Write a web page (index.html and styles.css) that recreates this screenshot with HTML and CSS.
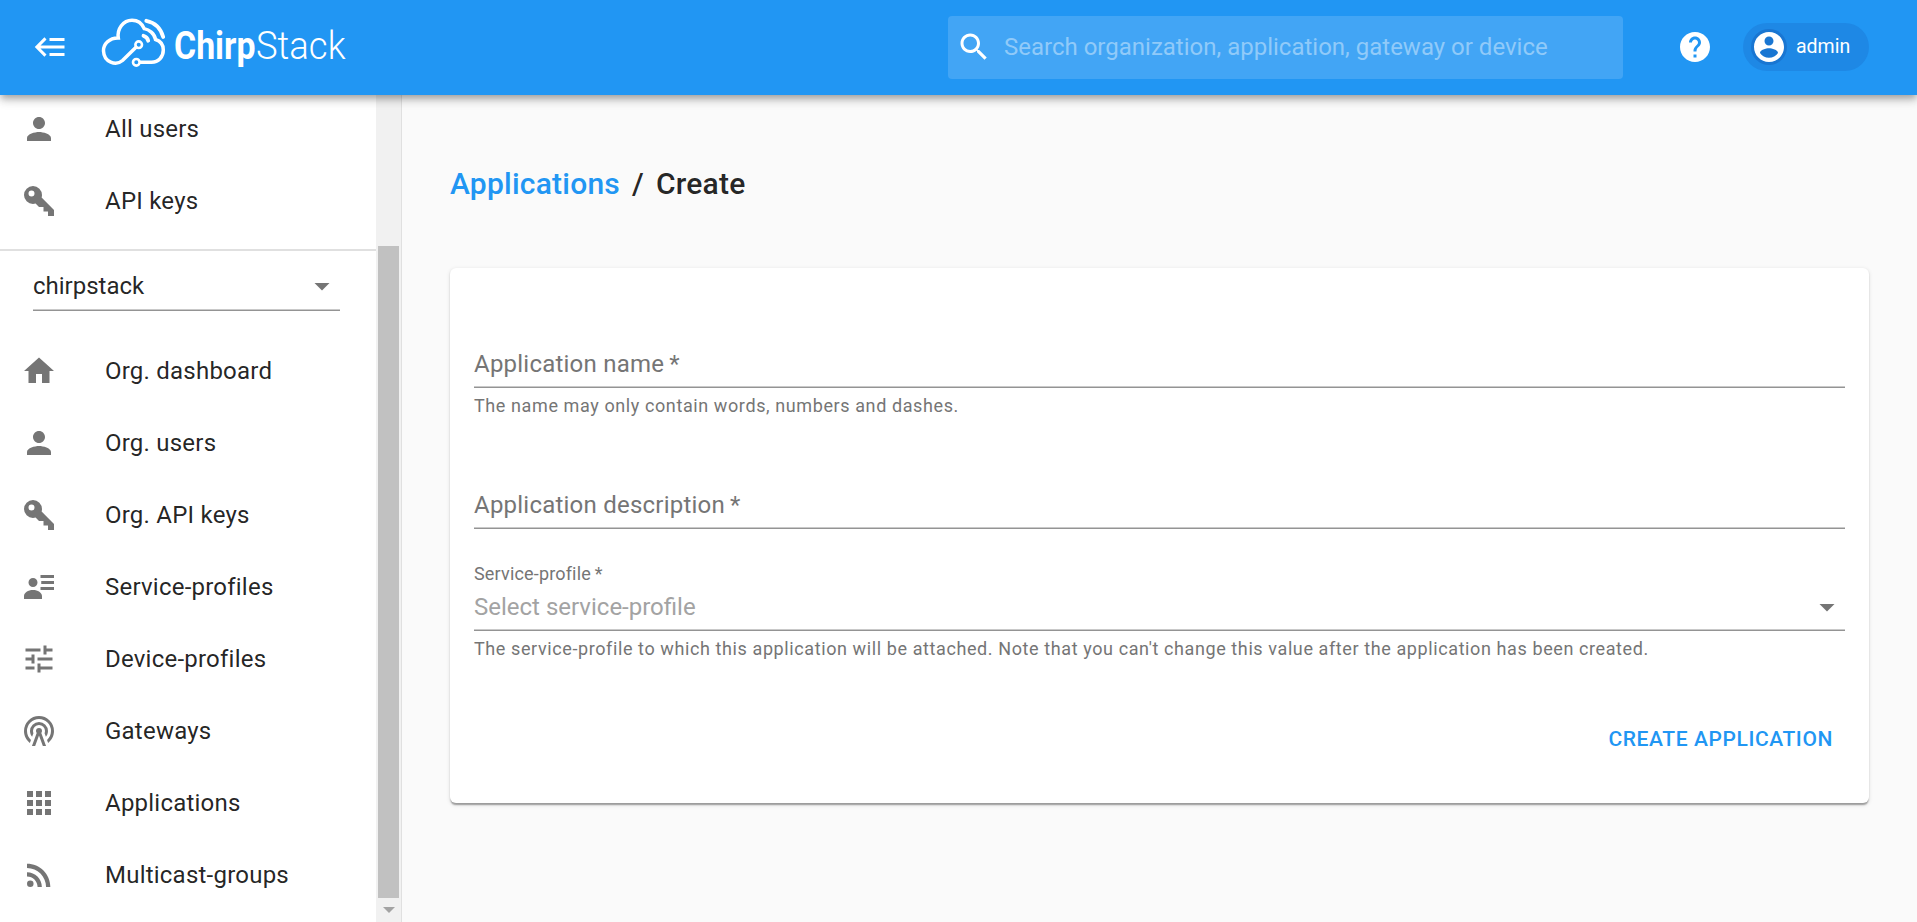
FILE: index.html
```html
<!DOCTYPE html>
<html lang="en">
<head>
<meta charset="utf-8">
<title>ChirpStack Application Server</title>
<link rel="stylesheet" href="styles.css">
</head>
<body>
<header class="appbar">
  <svg class="icon menu" viewBox="0 0 24 24"><path d="M5,13L9,17L7.6,18.42L1.18,12L7.6,5.58L9,7L5,11H21V13H5M21,6V8H11V6H21M21,16V18H11V16H21Z"/></svg>
  <svg class="logo" viewBox="0 0 250 60">
    <g fill="none" stroke="#fff" stroke-width="3.5" stroke-linecap="round">
      <path d="M35 35.300L21.500 48.500C15 54 3 50.500 2.500 39C2.200 32 8.500 25.700 17.300 25.900C16 17 22 8.200 31 8.200C36.500 8.200 41 11.500 43.200 16.600C48 17.500 53.500 21.500 54.500 27.500C59.500 29 62.300 33 62.300 38C62.300 45 57.500 50.300 50.500 50.300H39.500"/>
      <circle cx="37.700" cy="32.700" r="3.300" stroke-width="2.600"/>
      <circle cx="35.300" cy="50.300" r="3.300" stroke-width="2.600"/>
      <path stroke-width="3.800" d="M42.500 23.800Q46.300 24.800 47.200 28.700"/>
      <path stroke-width="3.800" d="M45.300 8.800Q58.500 11.500 62.200 25"/>
    </g>
    <text class="logo-bold" x="73" y="46.500" textLength="81.500" lengthAdjust="spacingAndGlyphs">Chirp</text>
    <text class="logo-light" x="155" y="46.500" textLength="89.500" lengthAdjust="spacingAndGlyphs">Stack</text>
  </svg>
  <div class="search">
    <svg class="icon" viewBox="0 0 24 24"><path d="M15.500 14h-.79l-.28-.27C15.410 12.590 16 11.110 16 9.500 16 5.910 13.090 3 9.500 3S3 5.910 3 9.500 5.910 16 9.500 16c1.610 0 3.090-.59 4.230-1.570l.27.280v.790l5 4.990L20.490 19l-4.990-5zm-6 0C7.010 14 5 11.990 5 9.500S7.010 5 9.500 5 14 7.010 14 9.500 11.990 14 9.500 14z"/></svg>
    <span class="search-text">Search organization, application, gateway or device</span>
  </div>
  <svg class="icon help" viewBox="0 0 24 24"><path d="M12 2C6.480 2 2 6.480 2 12s4.480 10 10 10 10-4.480 10-10S17.520 2 12 2zm1 17h-2v-2h2v2zm2.070-7.750l-.9.920C13.450 12.900 13 13.500 13 15h-2v-.5c0-1.100.450-2.100 1.170-2.830l1.240-1.260c.370-.360.590-.860.590-1.410 0-1.100-.9-2-2-2s-2 .9-2 2H8c0-2.210 1.790-4 4-4s4 1.790 4 4c0 .880-.360 1.680-.930 2.250z"/></svg>
  <div class="chip">
    <svg class="icon avatar" viewBox="0 0 24 24"><path d="M12 2C6.480 2 2 6.480 2 12s4.480 10 10 10 10-4.480 10-10S17.520 2 12 2zm0 3c1.660 0 3 1.340 3 3s-1.340 3-3 3-3-1.340-3-3 1.340-3 3-3zm0 14.200c-2.500 0-4.710-1.280-6-3.220.030-1.990 4-3.080 6-3.080 1.990 0 5.970 1.090 6 3.080-1.290 1.940-3.500 3.220-6 3.220z"/></svg>
    <span>admin</span>
  </div>
</header>

<div class="body">
  <aside class="drawer">
    <nav class="nav">
      <ul class="list list-top">
        <li class="item"><svg class="icon" viewBox="0 0 24 24"><path d="M12 12c2.210 0 4-1.790 4-4s-1.790-4-4-4-4 1.790-4 4 1.790 4 4 4zm0 2c-2.670 0-8 1.340-8 4v2h16v-2c0-2.660-5.330-4-8-4z"/></svg><span>All users</span></li>
        <li class="item"><svg class="icon" viewBox="0 0 24 24"><path d="M22,18V22H18V19H15V16H12L9.740,13.740C9.190,13.910 8.610,14 8,14A6,6 0 0,1 2,8A6,6 0 0,1 8,2A6,6 0 0,1 14,8C14,8.610 13.910,9.190 13.740,9.740L22,18M7,5A2,2 0 0,0 5,7A2,2 0 0,0 7,9A2,2 0 0,0 9,7A2,2 0 0,0 7,5Z"/></svg><span>API keys</span></li>
      </ul>
      <div class="org">
        <span>chirpstack</span>
        <svg class="icon" viewBox="0 0 24 24"><path d="M7 10l5 5 5-5z"/></svg>
      </div>
      <ul class="list">
        <li class="item"><svg class="icon" viewBox="0 0 24 24"><path d="M10 20v-6h4v6h5v-8h3L12 3 2 12h3v8z"/></svg><span>Org. dashboard</span></li>
        <li class="item"><svg class="icon" viewBox="0 0 24 24"><path d="M12 12c2.210 0 4-1.790 4-4s-1.790-4-4-4-4 1.790-4 4 1.790 4 4 4zm0 2c-2.670 0-8 1.340-8 4v2h16v-2c0-2.660-5.330-4-8-4z"/></svg><span>Org. users</span></li>
        <li class="item"><svg class="icon" viewBox="0 0 24 24"><path d="M22,18V22H18V19H15V16H12L9.740,13.740C9.190,13.910 8.610,14 8,14A6,6 0 0,1 2,8A6,6 0 0,1 8,2A6,6 0 0,1 14,8C14,8.610 13.910,9.190 13.740,9.740L22,18M7,5A2,2 0 0,0 5,7A2,2 0 0,0 7,9A2,2 0 0,0 9,7A2,2 0 0,0 7,5Z"/></svg><span>Org. API keys</span></li>
        <li class="item"><svg class="icon" viewBox="0 0 24 24"><path d="M13 4h9v2h-9zM13.500 8H22v2h-8.500zM13 12h9v2h-9zM8 6a3 3 0 1 1 0 6 3 3 0 0 1 0-6zM2 20v-2c0-2.200 2.700-4 6-4s6 1.800 6 4v2z"/></svg><span>Service-profiles</span></li>
        <li class="item"><svg class="icon" viewBox="0 0 24 24"><path d="M3 17v2h6v-2H3zM3 5v2h10V5H3zm10 16v-2h8v-2h-8v-2h-2v6h2zM7 9v2H3v2h4v2h2V9H7zm14 4v-2H11v2h10zm-6-4h2V7h4V5h-4V3h-2v6z"/></svg><span>Device-profiles</span></li>
        <li class="item"><svg class="icon" viewBox="0 0 24 24"><path d="M12,10A2,2 0 0,1 14,12C14,12.500 13.820,12.940 13.530,13.290L16.700,22H14.570L12,14.930L9.430,22H7.300L10.470,13.290C10.180,12.940 10,12.500 10,12A2,2 0 0,1 12,10M12,8A4,4 0 0,0 8,12C8,12.500 8.100,13 8.280,13.460L7.400,15.860C6.530,14.810 6,13.470 6,12A6,6 0 0,1 12,6A6,6 0 0,1 18,12C18,13.470 17.470,14.810 16.600,15.860L15.720,13.460C15.900,13 16,12.500 16,12A4,4 0 0,0 12,8M12,4A8,8 0 0,0 4,12C4,14.360 5,16.500 6.640,17.940L5.920,19.940C3.540,18.110 2,15.230 2,12A10,10 0 0,1 12,2A10,10 0 0,1 22,12C22,15.230 20.460,18.110 18.080,19.940L17.360,17.940C19,16.500 20,14.360 20,12A8,8 0 0,0 12,4Z"/></svg><span>Gateways</span></li>
        <li class="item"><svg class="icon" viewBox="0 0 24 24"><path d="M4 8h4V4H4v4zm6 12h4v-4h-4v4zm-6 0h4v-4H4v4zm0-6h4v-4H4v4zm6 0h4v-4h-4v4zm6-10v4h4V4h-4zm-6 4h4V4h-4v4zm6 6h4v-4h-4v4zm0 6h4v-4h-4v4z"/></svg><span>Applications</span></li>
        <li class="item"><svg class="icon" viewBox="0 0 24 24"><circle cx="6.180" cy="17.820" r="2.180"/><path d="M4 4.440v2.830c7.030 0 12.730 5.700 12.730 12.730h2.830c0-8.590-6.970-15.560-15.560-15.560zm0 5.660v2.830c3.900 0 7.070 3.170 7.070 7.070h2.830c0-5.470-4.430-9.900-9.900-9.900z"/></svg><span>Multicast-groups</span></li>
      </ul>
    </nav>
    <div class="scrollbar">
      <div class="thumb"></div>
      <svg class="scroll-arrow" viewBox="0 0 12 6"><path d="M0 0H12L6 6Z"/></svg>
    </div>
  </aside>

  <main class="main">
    <h1 class="crumbs"><a class="crumb-link">Applications</a><span class="slash">/</span><span>Create</span></h1>
    <section class="card">
      <div class="field"><span>Application name&thinsp;*</span></div>
      <p class="hint">The name may only contain words, numbers and dashes.</p>
      <div class="field field-desc"><span>Application description&thinsp;*</span></div>
      <div class="small-label">Service-profile&thinsp;*</div>
      <div class="field select"><span>Select service-profile</span><svg class="icon" viewBox="0 0 24 24"><path d="M7 10l5 5 5-5z"/></svg></div>
      <p class="hint">The service-profile to which this application will be attached. Note that you can't change this value after the application has been created.</p>
      <div class="actions"><button class="submit">Create application</button></div>
    </section>
  </main>
</div>
</body>
</html>
```
FILE: styles.css
```css
* { box-sizing: border-box; }
body {
  margin: 0;
  height: 922px;
  overflow: hidden;
  display: flex;
  flex-direction: column;
  background: #fafafa;
  color: rgba(0, 0, 0, 0.87);
  font-family: Roboto, "Liberation Sans", sans-serif;
  font-size: 24px;
  line-height: 36px;
}
.icon { width: 36px; height: 36px; flex: none; display: block; fill: #757575; }

.appbar {
  position: relative;
  z-index: 2;
  height: 95px;
  flex: none;
  display: flex;
  align-items: center;
  padding: 0 48px 1px 33px;
  background: #2196f3;
  color: #fff;
  box-shadow: 0 3px 6px -1.5px rgba(0,0,0,.2), 0 6px 7.5px 0 rgba(0,0,0,.14), 0 1.5px 15px 0 rgba(0,0,0,.12);
}
.appbar .icon { fill: #fff; }
.logo { width: 250px; height: 60px; margin: 0 auto 10px 32px; fill: #fff; overflow: visible; }
.logo-bold { font-size: 38px; font-weight: 700; }
.logo-light { font-size: 38px; font-weight: 300; }
.search {
  width: 675px;
  height: 63px;
  flex: none;
  margin-top: 1px;
  display: flex;
  align-items: center;
  padding: 0 0 1px 8px;
  border-radius: 4px;
  background: #42a5f5;
}
.search-text { margin-left: 12px; color: #90caf9; }
.help { margin: 0 30px 0 54px; }
.chip {
  width: 126px;
  height: 48px;
  display: flex;
  align-items: center;
  padding-left: 8px;
  border-radius: 24px;
  background: #1e88e5;
  font-size: 19.5px;
}
.chip span { margin-left: 9px; }
.avatar { border-radius: 50%; background: #1976d2; }

.body { flex: 1; min-height: 0; display: flex; }
.drawer { width: 402px; flex: none; display: flex; background: #fff; border-right: 1px solid #e0e0e0; overflow: hidden; }
.nav { width: 376px; flex: none; }
.list { list-style: none; margin: 0; padding: 0; }
.list-top { margin-top: -2px; padding-bottom: 12px; border-bottom: 2px solid #e0e0e0; }
.item { height: 72px; display: flex; align-items: center; padding-left: 21px; letter-spacing: 0.225px; }
.item span { margin-left: 48px; }
.org {
  height: 60px;
  margin: 0 36px 24px 33px;
  padding-top: 17px;
  display: flex;
  justify-content: space-between;
  box-shadow: inset 0 -1px #949494, inset 0 -2px #c9c9c9;
}
.scrollbar { flex: 1; display: flex; flex-direction: column; background: #f1f1f1; padding: 151px 2px 0; }
.thumb { width: 21px; height: 652px; background: #c1c1c1; }
.scroll-arrow { width: 12px; height: 6px; margin: 9px 0 0 5px; fill: #a3a3a3; }

.main { flex: 1; padding: 66px 48px 0; }
.crumbs { margin: 0; font-size: 30px; line-height: 45px; font-weight: 500; letter-spacing: 0.225px; }
.crumb-link { color: #2196f3; }
.slash { margin: 0 12px; }
.card {
  height: 535px;
  margin-top: 62px;
  padding: 78px 24px 0;
  border-radius: 6px;
  background: #fff;
  box-shadow: 0 3px 1.5px -1.5px rgba(0,0,0,.2), 0 1.5px 1.5px 0 rgba(0,0,0,.14), 0 1.5px 4.5px 0 rgba(0,0,0,.12);
}
.field {
  height: 42px;
  display: flex;
  justify-content: space-between;
  color: #757575;
  letter-spacing: 0.225px;
  box-shadow: inset 0 -1px #949494, inset 0 -2px #c9c9c9;
}
.hint { margin: 3px 0 0; height: 31px; line-height: 30px; font-size: 18px; letter-spacing: 0.6px; color: #757575; }
.field-desc { margin-top: 65px; }
.small-label { margin-top: 32px; height: 26px; line-height: 26px; font-size: 18px; color: #757575; letter-spacing: 0.169px; }
.select { height: 44px; padding-top: 2px; }
.select span { color: #a3a3a3; letter-spacing: 0; }
.actions { display: flex; justify-content: flex-end; margin-top: 56px; padding-right: 12px; }
.submit {
  border: 0;
  padding: 0;
  background: none;
  color: #2196f3;
  font: 500 21px/36px Roboto, sans-serif;
  letter-spacing: 0.6px;
  text-transform: uppercase;
}
```
